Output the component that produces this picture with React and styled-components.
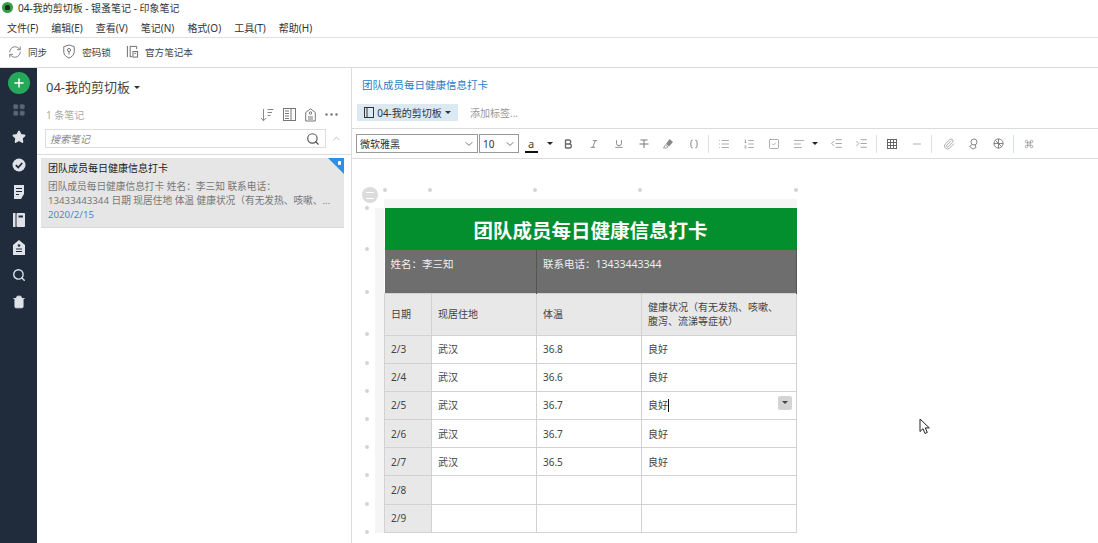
import styled, { createGlobalStyle } from 'styled-components';
import {
  RefreshCw, Plus, Star, Search, Trash2, ChevronDown, ChevronUp, LayoutGrid,
  Italic, Underline, Braces, List, ListOrdered, SquareCheck,
  AlignLeft, IndentDecrease, IndentIncrease, Minus, Paperclip, Command,
} from 'lucide-react';

const GlobalStyle = createGlobalStyle`
  html, body { margin: 0; padding: 0; height: 100%; background: #fff; overflow: hidden; }
  body { font-family: "Noto Sans", "Noto Sans CJK SC", "Liberation Sans", sans-serif; color: #333; }
  #root { height: 100%; }
  * { box-sizing: border-box; }
`;

const Page = styled.div`
  width: 1098px;
  height: 543px;
  display: flex;
  flex-direction: column;
  position: relative;
  overflow: hidden;
`;

const TitleBar = styled.div`
  height: 14px;
  display: flex;
  align-items: center;
  gap: 5px;
  padding: 0 2px;
  font-size: 10px;
  color: #333;
`;

const AppLogo = styled.span`
  width: 11px;
  height: 11px;
  border-radius: 50%;
  background: #2f9e44;
  display: flex;
  align-items: center;
  justify-content: center;
  &::after {
    content: '';
    width: 5px;
    height: 5px;
    border-radius: 2px 2px 1px 1px;
    background: #1c2a1c;
  }
`;

const MenuBar = styled.div`
  height: 24px;
  display: flex;
  align-items: center;
  gap: 13px;
  padding: 3px 7px 0;
  font-size: 10px;
  color: #333;
  border-bottom: 1px solid #e0e0e0;
`;

const MainToolbar = styled.div`
  height: 30px;
  display: flex;
  align-items: center;
  gap: 15px;
  padding: 0 8px 2px;
  font-size: 9.6px;
  color: #444;
  border-bottom: 1px solid #dcdcdc;
`;

const ToolAction = styled.div`
  display: flex;
  align-items: center;
  gap: 6px;
  svg { color: #666; }
`;

const Workspace = styled.div`
  flex: 1;
  display: flex;
  min-height: 0;
`;

const Rail = styled.nav`
  width: 37px;
  background: #202c3c;
  display: flex;
  flex-direction: column;
  align-items: center;
  padding-top: 4px;
  color: #dfe3e8;
`;

const AddButton = styled.div`
  width: 22px;
  height: 22px;
  border-radius: 50%;
  background: #25a85a;
  color: #fff;
  display: flex;
  align-items: center;
  justify-content: center;
  margin: 0 0 2px;
`;

const RailItem = styled.div`
  height: 27.5px;
  width: 100%;
  flex: none;
  display: flex;
  align-items: center;
  justify-content: center;
  color: ${p => (p.$dim ? '#5d6673' : '#dfe3e8')};
`;

const NoteList = styled.section`
  width: 315px;
  border-right: 1px solid #dcdcdc;
  display: flex;
  flex-direction: column;
`;

const ListHead = styled.div`
  padding: 9px 0 0 9px;
  height: 61px;
  margin-right: 7px;
`;

const NotebookName = styled.div`
  display: flex;
  align-items: center;
  gap: 4px;
  font-size: 13px;
  line-height: 20px;
  color: #444;
`;

const Caret = styled.span`
  display: inline-block;
  width: 0;
  height: 0;
  border-left: ${p => p.$s || 3}px solid transparent;
  border-right: ${p => p.$s || 3}px solid transparent;
  border-top: ${p => p.$s || 3}px solid ${p => p.$c || '#333'};
`;

const CountRow = styled.div`
  display: flex;
  align-items: center;
  justify-content: space-between;
  margin-top: 10px;
  padding-right: 6px;
  font-size: 10px;
  color: #aaa;
`;

const CountIcons = styled.div`
  display: flex;
  align-items: center;
  gap: 9px;
  color: #777;
`;

const SearchRow = styled.div`
  display: flex;
  align-items: flex-start;
  height: 26px;
  padding-left: 8px;
  border-bottom: 1px solid #dcdcdc;
  color: #bbb;
`;

const SearchBox = styled.div`
  width: 281px;
  height: 19px;
  border: 1px solid #ddd;
  display: flex;
  align-items: center;
  justify-content: space-between;
  padding: 0 5px 0 4px;
  margin-right: 5px;
  font-size: 10px;
  font-style: italic;
  color: #888;
  svg { color: #555; }
`;

const CollapseIcon = styled.div`
  height: 19px;
  display: flex;
  align-items: center;
`;

const NoteCard = styled.article`
  position: relative;
  margin: 3px 7px 0 4px;
  height: 70px;
  background: #e6e6e6;
  padding: 3px 7px;
  font-size: 9.7px;
  line-height: 14px;
  color: #777;
  white-space: nowrap;
  border-bottom: 1px solid #d8d8d8;
`;

const CardTitle = styled.div`
  color: #222;
  font-size: 10px;
  line-height: 15px;
  margin-bottom: 4px;
`;

const CardDate = styled.div`
  color: #4d86cc;
`;

const Ribbon = styled.span`
  position: absolute;
  top: 0;
  right: 0;
  width: 0;
  height: 0;
  border-top: 16px solid #2e8fe6;
  border-left: 16px solid transparent;
  &::after {
    content: '';
    position: absolute;
    top: -13px;
    right: 3px;
    width: 3px;
    height: 4px;
    border-radius: 1px;
    background: #fff;
  }
`;

const Editor = styled.main`
  flex: 1;
  display: flex;
  flex-direction: column;
  position: relative;
  min-width: 0;
`;

const NoteTitle = styled.div`
  padding: 9px 0 0 10px;
  height: 36px;
  font-size: 10.5px;
  line-height: 16px;
  color: #2b7cc4;
`;

const TagRow = styled.div`
  display: flex;
  align-items: center;
  gap: 12px;
  height: 25px;
  padding: 0 0 7px 5px;
  font-size: 10px;
  color: #999;
  border-bottom: 1px solid #dcdcdc;
`;

const NotebookChip = styled.div`
  width: 101px;
  height: 17px;
  background: #dbe9f2;
  display: flex;
  align-items: center;
  justify-content: center;
  gap: 3px;
  color: #333;
`;

const FormatBar = styled.div`
  height: 30px;
  display: flex;
  align-items: center;
  padding-left: 4px;
  border-bottom: 1px solid #dcdcdc;
  color: #777;
`;

const SelectBox = styled.div`
  width: ${p => p.$w}px;
  height: 19px;
  margin-right: 1px;
  border: 1px solid #999;
  display: flex;
  align-items: center;
  justify-content: space-between;
  padding: 0 2px 0 3px;
  font-size: 10px;
  color: #333;
  svg { color: #777; }
`;

const ColorButton = styled.div`
  width: 24px;
  height: 19px;
  margin-left: -1px;
  display: flex;
  flex-direction: column;
  align-items: center;
  justify-content: flex-end;
  font-size: 11px;
  line-height: 12px;
  color: #444;
  &::after {
    content: '';
    width: 13px;
    height: 2px;
    background: #111;
    margin-top: 1px;
  }
`;

const ToolButton = styled.div`
  width: ${p => p.$w || 25}px;
  margin-left: ${p => p.$ml || 0}px;
  height: 19px;
  display: flex;
  align-items: center;
  justify-content: center;
  gap: 7px;
`;

const Sep = styled.span`
  width: 1px;
  height: 18px;
  margin: 0 2px;
  background: #d5e2ea;
`;

const NoteBody = styled.div`
  flex: 1;
  position: relative;
  padding: 49px 0 0 32px;
  overflow: hidden;
`;

const Band = styled.div`
  position: absolute;
  background: #f5f5f5;
  ${p => (p.$top
    ? 'left: 32px; top: 40px; width: 413px; height: 9px;'
    : 'left: 23px; top: 49px; width: 9px; height: 325px;')}
`;

const Handle = styled.span`
  position: absolute;
  width: 4px;
  height: 4px;
  border-radius: 50%;
  background: #d4d4d4;
`;

const CollapseBtn = styled.div`
  position: absolute;
  left: 10px;
  top: 28px;
  width: 16px;
  height: 16px;
  border-radius: 50%;
  background: #dcdcdc;
  display: flex;
  align-items: center;
  justify-content: center;
  &::after {
    content: '';
    width: 8px;
    height: 5px;
    border-top: 1.5px solid #fff;
    border-bottom: 1.5px solid #fff;
  }
`;

const Sheet = styled.table`
  position: relative;
  width: 413px;
  table-layout: fixed;
  border-collapse: collapse;
  font-size: 10px;
  color: #444;
`;

const Cell = styled.td`
  position: relative;
  height: ${p => p.$h || 28.2}px;
  padding: 0 6px;
  border: 1px solid #d2d2d2;
  line-height: 14px;
  background: ${p => p.$bg || '#fff'};
`;

const HeadingCell = styled.td`
  height: 42px;
  background: #048f2f;
  color: #fff;
  font-size: 19.5px;
  font-weight: 700;
  text-align: center;
`;

const InfoCell = styled.td`
  height: 43px;
  background: #6e6e6e;
  color: #f0f0f0;
  padding: 7px 6px 0;
  vertical-align: top;
  font-size: 10.5px;
  line-height: 14px;
  border-right: 1px solid #555;
`;

const TextCaret = styled.span`
  display: inline-block;
  width: 1px;
  height: 13px;
  background: #111;
  vertical-align: -3px;
`;

const CellDrop = styled.span`
  position: absolute;
  right: 4px;
  top: 4px;
  width: 14px;
  height: 14px;
  border-radius: 2px;
  background: #d4d4d4;
  display: flex;
  align-items: center;
  justify-content: center;
`;

const Pointer = styled.svg`
  position: absolute;
  left: 919px;
  top: 418px;
`;

const ShieldIcon = () => (
  <svg width="14" height="17" viewBox="0 0 16 17" fill="none" stroke="#666" strokeWidth="1">
    <path d="M8 1 14 3v6c0 3.500-3 5.700-6 7-3-1.300-6-3.500-6-7V3z" />
    <circle cx="8" cy="6.800" r="1.800" />
    <path d="M8 8.600V12" />
  </svg>
);

const NotebookIcon = ({ size = 13, color = '#666' }) => (
  <svg width={size} height={size} viewBox="0 0 14 14" fill="none" stroke={color} strokeWidth="1">
    <path d="M1.500 1v12M4.500 1v12M4.500 1.500h7v3M4.500 12.500h2" />
    <rect x="7.500" y="7" width="5" height="6" />
    <path d="M9 9h2" />
  </svg>
);

const BookIcon = () => (
  <svg width="10" height="11" viewBox="0 0 10 11" fill="none" stroke="#333" strokeWidth="1">
    <rect x="0.500" y="0.500" width="9" height="10" />
    <path d="M3 0.500v10" />
  </svg>
);

const CheckSolid = () => (
  <svg width="14" height="14" viewBox="0 0 14 14">
    <circle cx="7" cy="7" r="6.500" fill="#dfe3e8" />
    <path d="M3.800 7.200 6.200 9.500 10.200 5" fill="none" stroke="#202c3c" strokeWidth="1.800" />
  </svg>
);

const NoteIcon = () => (
  <svg width="12" height="14" viewBox="0 0 12 14" fill="#dfe3e8">
    <path d="M1 0h10v9l-3 5H1z" />
    <path d="M3 3.500h6M3 6.500h6M3 9.500h3" stroke="#202c3c" strokeWidth="1.200" />
  </svg>
);

const NotebookSolid = () => (
  <svg width="12" height="14" viewBox="0 0 12 14" fill="#dfe3e8">
    <rect x="0" y="0" width="2.500" height="14" />
    <rect x="3.500" y="0" width="8.500" height="14" rx="1" />
    <rect x="5.500" y="2.500" width="4.500" height="2" fill="#202c3c" />
  </svg>
);

const TagSolid = () => (
  <svg width="12" height="15" viewBox="0 0 12 15" fill="#dfe3e8">
    <path d="M6 0 12 5v10H0V5z" />
    <circle cx="6" cy="5.500" r="1.300" fill="#202c3c" />
    <path d="M3 9h6M3 11.500h6" stroke="#202c3c" strokeWidth="1.200" />
  </svg>
);

const TagOutline = () => (
  <svg width="11" height="14" viewBox="0 0 11 14" fill="none" stroke="#777" strokeWidth="1">
    <path d="M5.500 0.800 10.300 4.500V13H0.700V4.500z" />
    <circle cx="5.500" cy="5" r="1.200" />
    <path d="M3 9h5M3 11h5" />
  </svg>
);

const SortIcon = () => (
  <svg width="14" height="14" viewBox="0 0 14 14" fill="none" stroke="#888" strokeWidth="1">
    <path d="M3.500 1v11.500M1 10l2.500 2.800L6 10" />
    <path d="M7.500 1.500h6M7.500 4.500h4.500M7.500 7.500h3" />
  </svg>
);

const PanelIcon = () => (
  <svg width="13" height="13" viewBox="0 0 13 13" fill="none" stroke="#777" strokeWidth="1">
    <rect x="0.500" y="0.500" width="12" height="12" />
    <path d="M8 0.500v12M2 3h4M2 5.500h4M2 8h4M2 10.500h4" />
  </svg>
);

const DotsIcon = () => (
  <svg width="13" height="3" viewBox="0 0 13 3" fill="#777">
    <circle cx="1.500" cy="1.500" r="1.200" />
    <circle cx="6.500" cy="1.500" r="1.200" />
    <circle cx="11.500" cy="1.500" r="1.200" />
  </svg>
);

const BoldIcon = () => (
  <svg width="9" height="10" viewBox="0 0 9 10" fill="none" stroke="#666" strokeWidth="1.300">
    <path d="M1.500 1v8M1.500 1h3.200a2 2 0 0 1 0 4H1.500M1.500 5h3.800a2 2 0 0 1 0 4H1.500" />
  </svg>
);

const StrikeIcon = () => (
  <svg width="10" height="10" viewBox="0 0 10 10" fill="none" stroke="#777" strokeWidth="1">
    <path d="M1.500 1h7M5 1v8M0.500 5h9" />
  </svg>
);

const MarkerIcon = () => (
  <svg width="11" height="11" viewBox="0 0 11 11" fill="#888">
    <path d="M6.500 1 10 4 6 8.500 3 6z" />
    <path d="M2.500 6.800 5 9 3 10H0.500z" fill="none" stroke="#888" strokeWidth="0.800" />
  </svg>
);

const GridIcon = () => (
  <svg width="10" height="10" viewBox="0 0 10 10" fill="none" stroke="#666" strokeWidth="1">
    <rect x="0.500" y="0.500" width="9" height="9" />
    <path d="M3.500 0.500v9M6.500 0.500v9M0.500 3.500h9M0.500 6.500h9" />
  </svg>
);

const PinIcon = () => (
  <svg width="11" height="12" viewBox="0 0 11 12" fill="none" stroke="#888" strokeWidth="1">
    <circle cx="6" cy="4" r="3" />
    <path d="M4 6.500 1.500 8.500 5 11l3-1.500-1-3" />
  </svg>
);

const GlobeIcon = () => (
  <svg width="11" height="11" viewBox="0 0 12 12" fill="none" stroke="#777" strokeWidth="1">
    <circle cx="6" cy="6" r="5" />
    <path d="M1 6h10M6 1v10M2.500 2.500 9.500 9.500" />
  </svg>
);

const dates = ['2/3', '2/4', '2/5', '2/6', '2/7', '2/8', '2/9'];
const records = {
  '2/3': ['武汉', '36.8', '良好'],
  '2/4': ['武汉', '36.6', '良好'],
  '2/5': ['武汉', '36.7', '良好'],
  '2/6': ['武汉', '36.7', '良好'],
  '2/7': ['武汉', '36.5', '良好'],
  '2/8': ['', '', ''],
  '2/9': ['', '', ''],
};

const topHandles = [31, 76, 181, 286, 442];
const leftHandles = [47, 88, 131, 173, 202, 230, 258, 286, 314, 343, 371];

export default function App() {
  return (
    <Page>
      <GlobalStyle />
      <TitleBar>
        <AppLogo />
        04-我的剪切板 - 银蚤笔记 - 印象笔记
      </TitleBar>
      <MenuBar>
        {['文件(F)', '编辑(E)', '查看(V)', '笔记(N)', '格式(O)', '工具(T)', '帮助(H)'].map(m => (
          <span key={m}>{m}</span>
        ))}
      </MenuBar>
      <MainToolbar>
        <ToolAction><RefreshCw size={14} strokeWidth={1.300} />同步</ToolAction>
        <ToolAction><ShieldIcon />密码锁</ToolAction>
        <ToolAction><NotebookIcon />官方笔记本</ToolAction>
      </MainToolbar>
      <Workspace>
        <Rail>
          <AddButton><Plus size={14} strokeWidth={2.500} /></AddButton>
          <RailItem $dim><LayoutGrid size={14} fill="#5d6673" strokeWidth={1} /></RailItem>
          <RailItem><Star size={14} fill="#dfe3e8" /></RailItem>
          <RailItem><CheckSolid /></RailItem>
          <RailItem><NoteIcon /></RailItem>
          <RailItem><NotebookSolid /></RailItem>
          <RailItem><TagSolid /></RailItem>
          <RailItem><Search size={14} strokeWidth={2.400} /></RailItem>
          <RailItem><Trash2 size={14} fill="#dfe3e8" strokeWidth={1.500} /></RailItem>
        </Rail>
        <NoteList>
          <ListHead>
            <NotebookName>04-我的剪切板<Caret /></NotebookName>
            <CountRow>
              1 条笔记
              <CountIcons>
                <SortIcon />
                <PanelIcon />
                <TagOutline />
                <DotsIcon />
              </CountIcons>
            </CountRow>
          </ListHead>
          <SearchRow>
            <SearchBox>搜索笔记<Search size={14} strokeWidth={2} /></SearchBox>
            <CollapseIcon><ChevronUp size={11} /></CollapseIcon>
          </SearchRow>
          <NoteCard>
            <CardTitle>团队成员每日健康信息打卡</CardTitle>
            <div>团队成员每日健康信息打卡 姓名：李三知 联系电话：</div>
            <div>13433443344 日期 现居住地 体温 健康状况（有无发热、咳嗽、...</div>
            <CardDate>2020/2/15</CardDate>
            <Ribbon />
          </NoteCard>
        </NoteList>
        <Editor>
          <NoteTitle>团队成员每日健康信息打卡</NoteTitle>
          <TagRow>
            <NotebookChip><BookIcon />04-我的剪切板<Caret /></NotebookChip>
            添加标签...
          </TagRow>
          <FormatBar>
            <SelectBox $w={122}>微软雅黑<ChevronDown size={12} /></SelectBox>
            <SelectBox $w={40}>10<ChevronDown size={12} /></SelectBox>
            <ColorButton>a</ColorButton>
            <ToolButton $w={13}><Caret $c="#222" /></ToolButton>
            <ToolButton><BoldIcon /></ToolButton>
            <ToolButton><Italic size={10} /></ToolButton>
            <ToolButton><Underline size={10} /></ToolButton>
            <ToolButton><StrikeIcon /></ToolButton>
            <ToolButton><MarkerIcon /></ToolButton>
            <ToolButton><Braces size={10} /></ToolButton>
            <Sep />
            <ToolButton><List size={12} strokeWidth={1.200} /></ToolButton>
            <ToolButton><ListOrdered size={12} strokeWidth={1.200} /></ToolButton>
            <ToolButton><SquareCheck size={12} strokeWidth={1.200} /></ToolButton>
            <ToolButton $w={38}><AlignLeft size={12} strokeWidth={1.200} /><Caret $c="#222" /></ToolButton>
            <ToolButton><IndentDecrease size={13} strokeWidth={1.200} /></ToolButton>
            <ToolButton><IndentIncrease size={13} strokeWidth={1.200} /></ToolButton>
            <Sep />
            <ToolButton><GridIcon /></ToolButton>
            <ToolButton><Minus size={12} strokeWidth={1.200} /></ToolButton>
            <Sep />
            <ToolButton $ml={2}><Paperclip size={12} strokeWidth={1.200} /></ToolButton>
            <ToolButton><PinIcon /></ToolButton>
            <ToolButton><GlobeIcon /></ToolButton>
            <Sep />
            <ToolButton><Command size={10} strokeWidth={1.400} /></ToolButton>
          </FormatBar>
          <NoteBody>
            <Band $top />
            <Band />
            <CollapseBtn />
            {topHandles.map(x => <Handle key={x} style={{ left: x, top: 29 }} />)}
            {leftHandles.map(y => <Handle key={y} style={{ left: 13, top: y }} />)}
            <Sheet>
              <colgroup>
                <col style={{ width: 47 }} />
                <col style={{ width: 105 }} />
                <col style={{ width: 105 }} />
                <col style={{ width: 155 }} />
              </colgroup>
              <tbody>
                <tr><HeadingCell colSpan={4}>团队成员每日健康信息打卡</HeadingCell></tr>
                <tr>
                  <InfoCell colSpan={2}>姓名：李三知</InfoCell>
                  <InfoCell colSpan={2}>联系电话：13433443344</InfoCell>
                </tr>
                <tr>
                  <Cell $h={42} $bg="#e8e8e8">日期</Cell>
                  <Cell $h={42} $bg="#e8e8e8">现居住地</Cell>
                  <Cell $h={42} $bg="#e8e8e8">体温</Cell>
                  <Cell $h={42} $bg="#e8e8e8">健康状况（有无发热、咳嗽、<br />腹泻、流涕等症状）</Cell>
                </tr>
                {dates.map(d => (
                  <tr key={d}>
                    <Cell $bg="#e8e8e8">{d}</Cell>
                    <Cell>{records[d][0]}</Cell>
                    <Cell>{records[d][1]}</Cell>
                    <Cell>
                      {records[d][2]}
                      {d === '2/5' && <TextCaret />}
                      {d === '2/5' && <CellDrop><Caret $c="#444" /></CellDrop>}
                    </Cell>
                  </tr>
                ))}
              </tbody>
            </Sheet>
          </NoteBody>
        </Editor>
      </Workspace>
      <Pointer width="12" height="17" viewBox="0 0 12 17">
        <path d="M1 1v12.500l3-2.800 2 4.800 2.300-1-2-4.600h4z" fill="#fff" stroke="#222" strokeWidth="1" />
      </Pointer>
    </Page>
  );
}
